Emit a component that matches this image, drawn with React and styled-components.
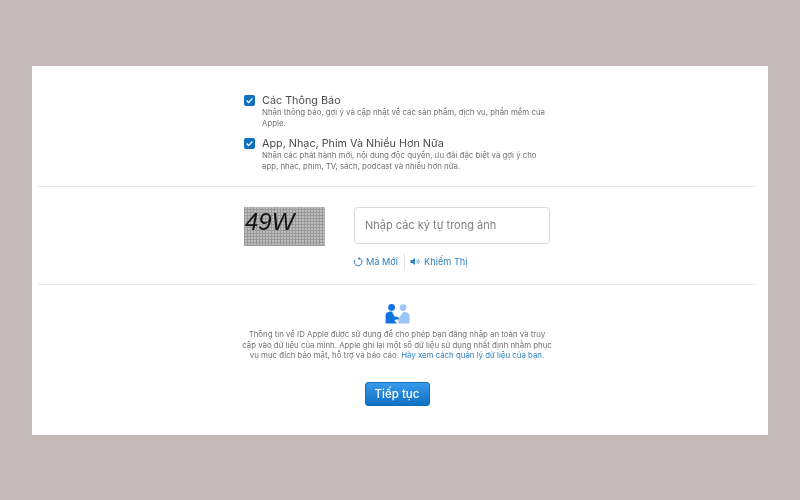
import React from "react";
import styled, { createGlobalStyle } from "styled-components";

const Global = createGlobalStyle`
  html, body { margin: 0; padding: 0; }
  body { font-family: "Inter", "Liberation Sans", "Noto Sans", sans-serif; }
`;
const Page = styled.div`
  width: 800px; height: 500px; background: #c5baba; padding-top: 66px; box-sizing: border-box; overflow: hidden;
`;
const Card = styled.main`
  width: 736px; height: 369px; margin: 0 auto; background: #fff; padding: 28px 12px 0 6px; box-sizing: border-box;
  display: flex; flex-direction: column; filter: blur(0.45px);
`;
const Options = styled.section`
  width: 306px; margin-left: 206px; height: 92px; display: flex; flex-direction: column; gap: 8px;
`;
const Option = styled.div`display: flex; gap: 7px;`;
const Box = styled.span`
  width: 11px; height: 11px; margin-top: 1px; border-radius: 2px; background: #0f6fc0; flex: none;
  display: flex; align-items: center; justify-content: center;
`;
const OptionBody = styled.div`display: flex; flex-direction: column;`;
const OptionTitle = styled.div`font-size: 10.8px; line-height: 13px; color: #4a4a4c;`;
const OptionText = styled.div`font-size: 7.85px; line-height: 11px; color: #717174;`;
const Divider = styled.hr`margin: 0; border: 0; height: 1px; background: #e8e8ea; flex: none;`;
const CaptchaRow = styled.section`
  height: 97px; padding: 20px 0 0 206px; box-sizing: border-box; display: flex; gap: 29px;
`;
const Captcha = styled.div`
  width: 81px; height: 39px; box-sizing: border-box; padding-left: 1px;
  background-color: #bdbdbd;
  background-image:
    repeating-linear-gradient(90deg, #9a9a9a 0 1px, transparent 1px 3px),
    repeating-linear-gradient(0deg, #9a9a9a 0 1px, transparent 1px 3px);
  font-family: "Liberation Sans", sans-serif; font-style: italic; font-size: 24px; line-height: 29px;
  color: #141414;
`;
const CaptchaTools = styled.div`display: flex; flex-direction: column; gap: 9px;`;
const Field = styled.input`
  width: 196px; height: 37px; box-sizing: border-box; border: 1px solid #d9d9dc; border-radius: 4px; outline: 0;
  padding: 0 10px 2px; font: 11px "Inter", "Liberation Sans", sans-serif; color: #333; background: #fff;
  &::placeholder { color: #808083; opacity: 1; }
`;
const ToolRow = styled.div`display: flex; align-items: center; height: 17px; margin-left: -1px;`;
const Tool = styled.span`
  display: inline-flex; align-items: center; gap: 3px; font-size: 9.2px; color: #2f7fbd;
`;
const ToolRule = styled.span`width: 1px; height: 17px; background: #e3e3e5; margin: 0 5px 0 6px;`;
const Info = styled.section`
  display: flex; flex-direction: column; align-items: center; padding-top: 19px;
`;
const IconWrap = styled.div`display: flex; height: 20px; margin-left: 2px;`;
const InfoText = styled.p`
  margin: 5px 0 0; text-align: center; font-size: 7.85px; line-height: 10.7px; color: #717174;
  white-space: nowrap;
`;
const InfoLink = styled.span`color: #2f7fbd;`;
const Continue = styled.button`
  margin-top: 21px; width: 65px; height: 24px; border: 1px solid #0f6cb8; border-radius: 3px; padding: 0;
  background: linear-gradient(#3a9aea, #0f70c4); color: #fff; font: 500 11.5px "Inter", "Liberation Sans", sans-serif;
`;

const Check = () => (
  <svg width="9" height="9" viewBox="0 0 9 9" fill="none">
    <path d="M1.6 4.6 3.6 6.6 7.4 2.4" stroke="#fff" strokeWidth="1.4" />
  </svg>
);
const Refresh = () => (
  <svg width="10" height="11" viewBox="0 0 10 10" fill="none">
    <path d="M2.1 3.2A3.8 3.8 0 1 0 6.6 2" stroke="#2f78b2" strokeWidth="1" />
    <path d="M6.8 .4 6.8 3.4 4.6 2z" fill="#2f78b2" />
  </svg>
);
const Speaker = () => (
  <svg width="11" height="9" viewBox="0 0 11 9" fill="none">
    <path d="M.5 3H2.4L5 1V8L2.4 6H.5z" fill="#2f7fbd" />
    <path d="M6.5 3A2 2 0 0 1 6.5 6M8 1.8A4 4 0 0 1 8 7.2" stroke="#2f7fbd" strokeWidth=".7" />
  </svg>
);
const People = () => (
  <svg width="26" height="20" viewBox="0 0 26 20">
    <circle cx="18" cy="3.6" r="3.4" fill="#9cc6f5" />
    <path d="M13.5 15 18 8.2C21 7.4 24.4 9 24.6 12V19.6H13.5z" fill="#9cc6f5" />
    <circle cx="6.6" cy="3.4" r="3.4" fill="#0f74e0" />
    <path d="M.6 19.6V11.5C.8 8.6 4 7 7 7.8L9.6 12.6 13 13 14.4 15 9 16 8 14.5 12 19.6z" fill="#0f74e0" />
  </svg>
);

export default function App() {
  return (
    <Page>
      <Global />
      <Card>
        <Options>
          <Option>
            <Box><Check /></Box>
            <OptionBody>
              <OptionTitle>Các Thông Báo</OptionTitle>
              <OptionText>Nhận thông báo, gợi ý và cập nhật về các sản phẩm, dịch vụ, phần mềm của Apple.</OptionText>
            </OptionBody>
          </Option>
          <Option>
            <Box><Check /></Box>
            <OptionBody>
              <OptionTitle>App, Nhạc, Phim Và Nhiều Hơn Nữa</OptionTitle>
              <OptionText>Nhận các phát hành mới, nội dung độc quyền, ưu đãi đặc biệt và gợi ý cho<br />app, nhạc, phim, TV, sách, podcast và nhiều hơn nữa.</OptionText>
            </OptionBody>
          </Option>
        </Options>
        <Divider />
        <CaptchaRow>
          <Captcha>49W</Captcha>
          <CaptchaTools>
            <Field placeholder="Nhập các ký tự trong ảnh" />
            <ToolRow>
              <Tool><Refresh />Mã Mới</Tool>
              <ToolRule />
              <Tool><Speaker />Khiếm Thị</Tool>
            </ToolRow>
          </CaptchaTools>
        </CaptchaRow>
        <Divider />
        <Info>
          <IconWrap><People /></IconWrap>
          <InfoText>
            Thông tin về ID Apple được sử dụng để cho phép bạn đăng nhập an toàn và truy<br />
            cập vào dữ liệu của mình. Apple ghi lại một số dữ liệu sử dụng nhất định nhằm phục<br />
            vụ mục đích bảo mật, hỗ trợ và báo cáo. <InfoLink>Hãy xem cách quản lý dữ liệu của bạn.</InfoLink>
          </InfoText>
          <Continue>Tiếp tục</Continue>
        </Info>
      </Card>
    </Page>
  );
}
